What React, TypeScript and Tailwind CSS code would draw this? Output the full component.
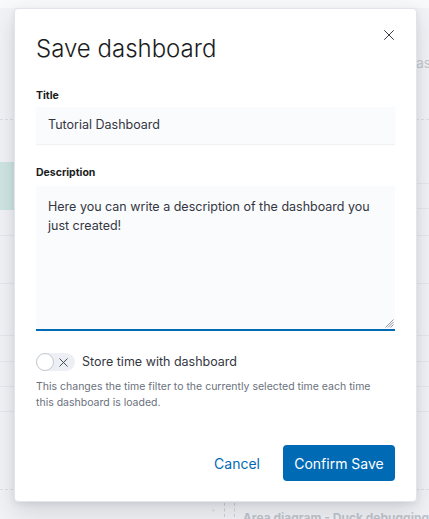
import { X, Settings } from "lucide-react";

const Background = () => {
  return (
    <div className="flex flex-col text-[#c3c7ce]">
      <div className="h-[8px] bg-[#f8f9fb]" />
      <div className="h-[112px] flex flex-col justify-start pt-[46px] border-b border-dashed border-[#dcdfe4]">
        <span className="pl-[408px] text-[14px] leading-[18px] whitespace-nowrap">Las</span>
      </div>
      <div className="h-[42px]" />
      <div className="h-[48px] flex">
        <div className="w-[120px] bg-[#cfe5e3]" />
        <div className="flex-1 flex flex-col">
          <div className="h-[22px] border-b border-[#e6e8ec]" />
          <div className="h-[25px] border-b border-[#e6e8ec]" />
        </div>
      </div>
      <div className="h-[26px] border-b border-[#e6e8ec]" />
      <div className="h-[48px] border-b border-[#e6e8ec]" />
      <div className="h-[52px] border-b border-[#e6e8ec]" />
      <div className="h-[26px] border-b border-[#e6e8ec]" />
      <div className="h-[25px] border-b border-[#e6e8ec]" />
      <div className="h-[25px] border-b border-[#e6e8ec]" />
      <div className="h-[78px] border-b border-dashed border-[#dcdfe4]" />
      <div className="h-[27px] flex items-start pt-[13px] pl-[212px]">
        <Settings size={15} strokeWidth={1.5} className="text-[#c8ccd3]" />
        <span className="ml-[9px] h-[14px] border-l border-dashed border-[#cdd0d6]" />
        <span className="ml-[9px] h-[14px] border-l border-dashed border-[#cdd0d6]" />
        <span className="ml-[8px] mt-[8px] text-[12px] leading-[14px] font-bold whitespace-nowrap text-[#c0c4cb]">
          Area diagram - Duck debugging
        </span>
      </div>
    </div>
  );
};

const SaveDashboardModal = () => {
  return (
    <div className="absolute left-[14px] top-[8px] w-[403px] bg-white rounded-[4px] border border-[#e1e4ea] shadow-[0_10px_24px_rgba(40,50,70,0.16),0_2px_6px_rgba(40,50,70,0.08)] flex flex-col px-[21px] pb-[20px]">
      <button className="absolute right-[18px] top-[17px] w-[18px] h-[18px] flex items-center justify-center text-[#343741]">
        <X size={18} strokeWidth={1.3} />
      </button>
      <h2 className="mt-[24px] text-[24px] leading-[32px] font-light text-[#1a1c21]">Save dashboard</h2>

      <label className="mt-[24px] text-[10.5px] leading-[14px] font-bold text-[#1a1c21]">Title</label>
      <div className="mt-[4px] h-[37px] bg-[#fafbfd] shadow-[0_1px_1px_rgba(0,0,0,0.05)] flex items-center px-[12px] text-[12.5px] text-[#343741]">
        Tutorial Dashboard
      </div>

      <label className="mt-[22px] text-[10.5px] leading-[14px] font-bold text-[#1a1c21]">Description</label>
      <div className="relative mt-[6px] h-[145px] bg-[#fafbfd] border-b-2 border-[#006bb4] pl-[12px] pr-[16px] pt-[11px] text-[12.5px] leading-[19px] text-[#343741]">
        Here you can write a description of the dashboard you just created!
        <svg className="absolute right-[1px] bottom-[1px]" width="9" height="9" viewBox="0 0 9 9">
          <path d="M8.5 0.5 L0.5 8.5 M8.5 3 L3 8.5 M8.5 5.5 L5.5 8.5" stroke="#9095a0" strokeWidth="1" />
        </svg>
      </div>

      <div className="mt-[22px] h-[18px] flex items-center gap-[7px]">
        <div className="w-[39px] h-[18px] rounded-full bg-[#eceff3] flex items-center">
          <div className="w-[18px] h-[18px] rounded-full bg-white border border-[#c3c7cf]" />
          <X size={15} strokeWidth={1.4} className="ml-[2px] text-[#343741]" />
        </div>
        <span className="text-[12.5px] leading-[18px] text-[#343741]">Store time with dashboard</span>
      </div>
      <p className="mt-[8px] text-[10.5px] leading-[16px] text-[#6a717d] pr-[16px]">
        This changes the time filter to the currently selected time each time this dashboard is loaded.
      </p>

      <div className="mt-[34px] flex items-center justify-end gap-[22px]">
        <button className="text-[14px] text-[#006bb4] px-[1px]">Cancel</button>
        <button className="h-[36px] w-[112px] rounded-[4px] bg-[#006bb4] text-white text-[14px]">Confirm Save</button>
      </div>
    </div>
  );
};

export default function App() {
  return (
    <div
      className="relative w-[429px] h-[519px] overflow-hidden bg-[#f2f3f6]"
      style={{ fontFamily: "Inter, 'Noto Sans', sans-serif" }}
    >
      <Background />
      <SaveDashboardModal />
    </div>
  );
}
